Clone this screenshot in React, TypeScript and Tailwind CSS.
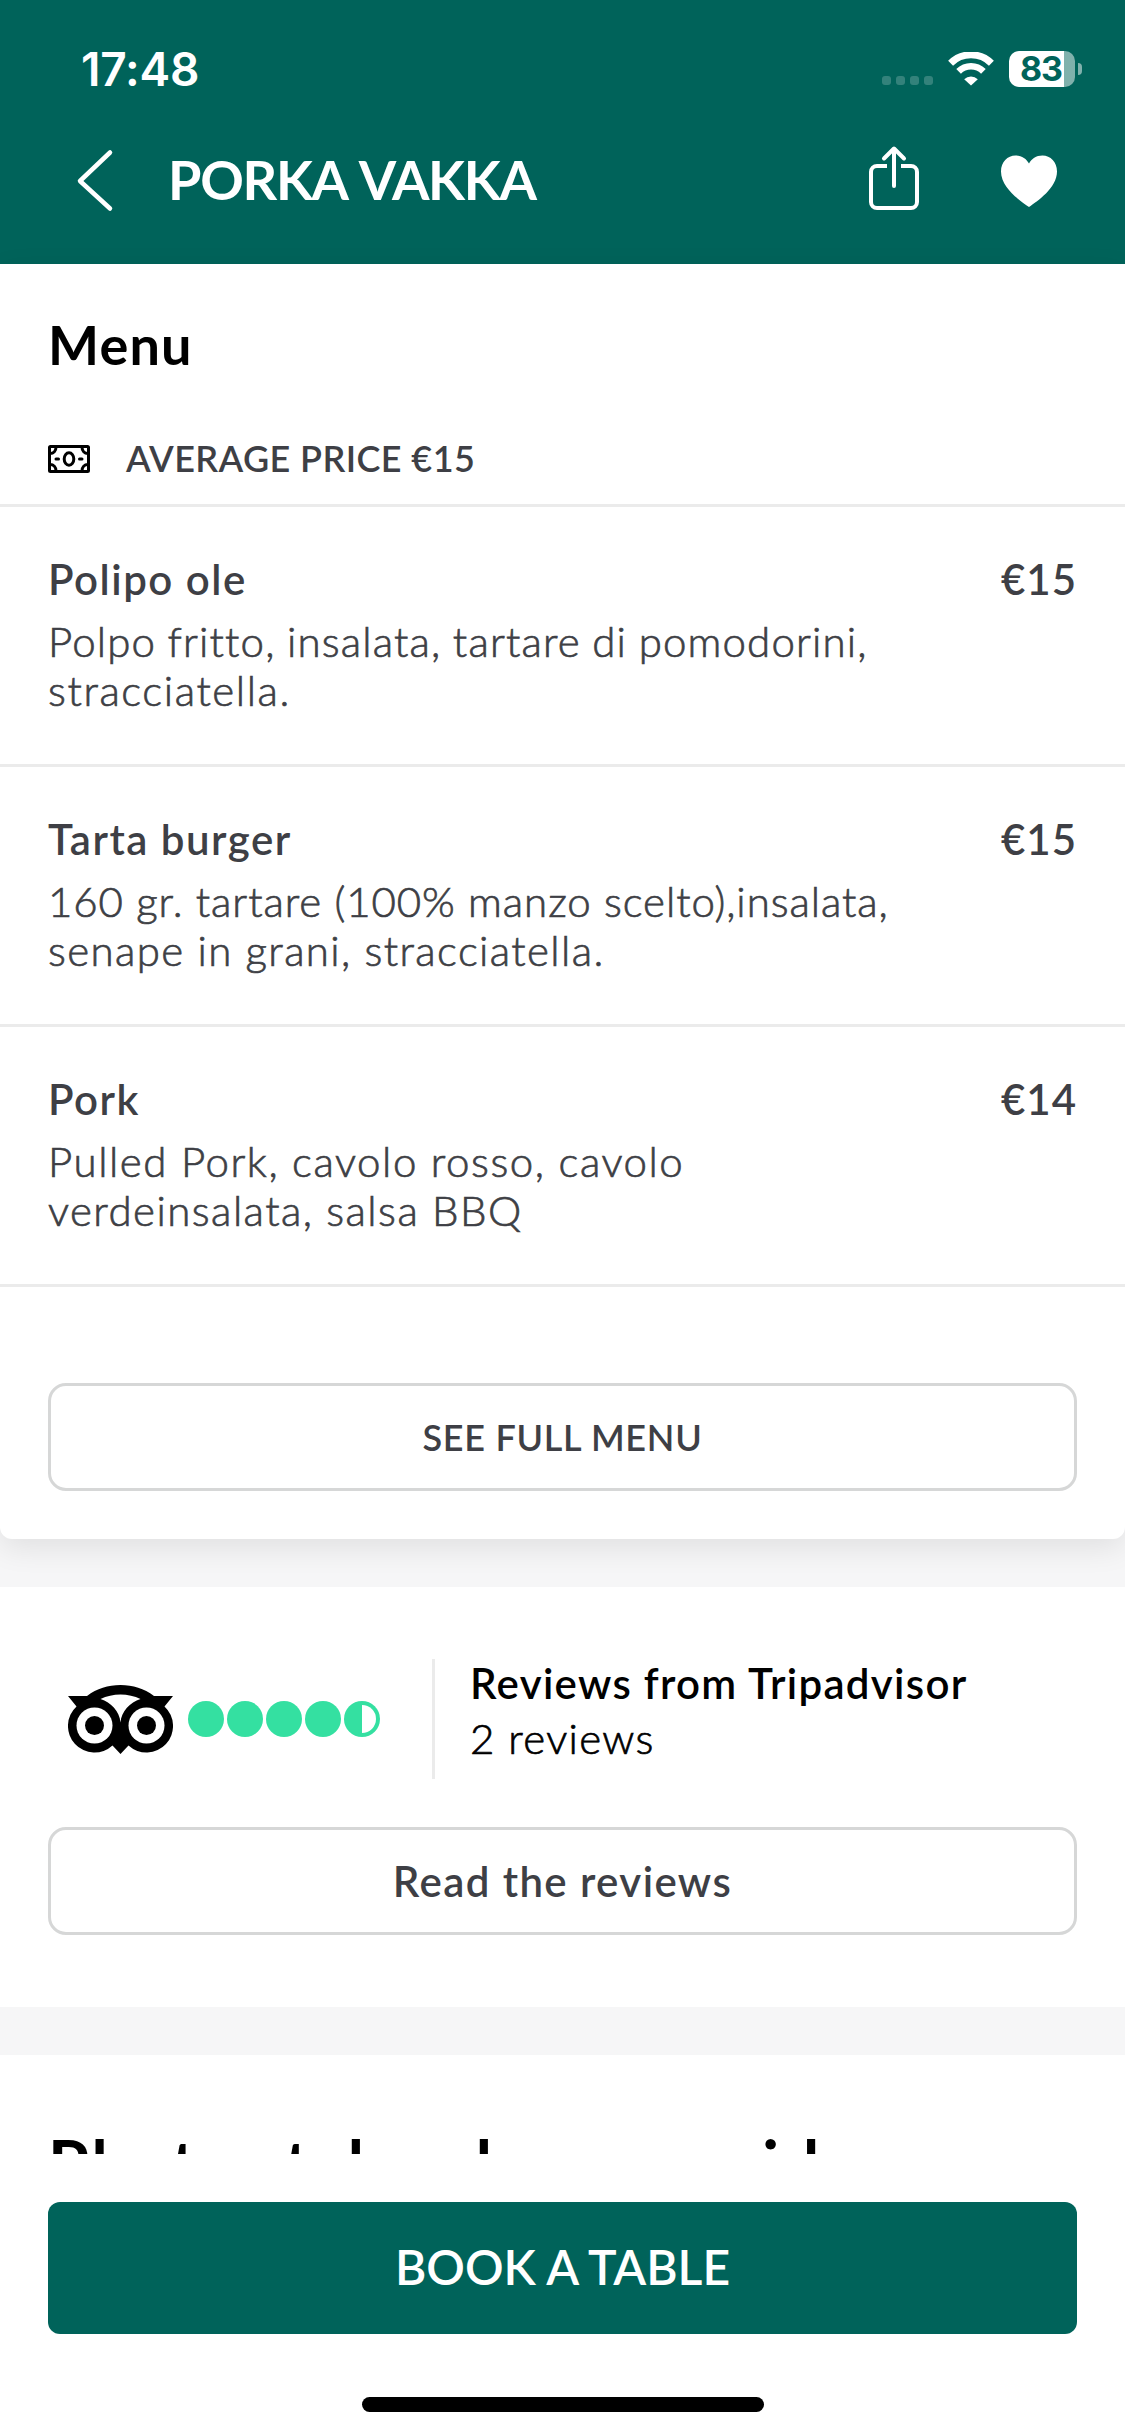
import React from 'react';

interface DishLine {
  text: string;
  tracking: string;
}

interface Dish {
  name: string;
  price: string;
  lines: DishLine[];
}

const DISHES: Dish[] = [
  {
    name: 'Polipo ole',
    price: '€15',
    lines: [
      { text: 'Polpo fritto, insalata, tartare di pomodorini,', tracking: 'tracking-[1.15px] [word-spacing:-1px]' },
      { text: 'stracciatella.', tracking: 'tracking-[1.6px]' },
    ],
  },
  {
    name: 'Tarta burger',
    price: '€15',
    lines: [
      { text: '160 gr. tartare (100% manzo scelto),insalata,', tracking: 'tracking-[0.93px]' },
      { text: 'senape in grani, stracciatella.', tracking: 'tracking-[1.4px]' },
    ],
  },
  {
    name: 'Pork',
    price: '€14',
    lines: [
      { text: 'Pulled Pork, cavolo rosso, cavolo', tracking: 'tracking-[1.55px]' },
      { text: 'verdeinsalata, salsa BBQ', tracking: 'tracking-[1.45px]' },
    ],
  },
];

function StatusBar() {
  return (
    <div className="flex h-[138px] items-center justify-between pl-[81px] pr-[43px] font-['Inter',sans-serif]">
      <span className="text-[46px] leading-none font-semibold tracking-[-0.2px]">17:48</span>
      <div className="flex items-center">
        <div className="mt-[23px] mr-[15px] flex gap-[5px]">
          <i className="size-[9px] rounded-[3px] bg-white/20" />
          <i className="size-[9px] rounded-[3px] bg-white/20" />
          <i className="size-[9px] rounded-[3px] bg-white/20" />
          <i className="size-[9px] rounded-[3px] bg-white/20" />
        </div>
        <svg className="mr-[15px] h-[34px] w-[46px]" viewBox="0 0 46 34" fill="none" stroke="#fff">
          <path d="M2.6 11.2a29 29 0 0 1 40.8 0" strokeWidth="7" />
          <path d="M10.6 19.4a17.6 17.6 0 0 1 24.8 0" strokeWidth="6.6" />
          <path d="M16.2 27.2a9.8 9.8 0 0 1 13.6 0L23 33.6z" fill="#fff" stroke="none" />
        </svg>
        <div className="flex h-9 w-[66px] items-center justify-center rounded-[10px] bg-linear-to-r from-white from-83% to-white/50 to-83% pr-0.5 text-[34px] leading-none font-bold tracking-[-1px] text-[#00635a]">
          83
        </div>
        <div className="ml-[3px] h-3 w-1 rounded-r-full bg-white/50" />
      </div>
    </div>
  );
}

function NavBar() {
  return (
    <div className="flex h-20 items-center pl-[72px] pr-[64px]">
      <svg className="h-20 w-[48px]" viewBox="0 0 48 80" fill="none" stroke="#fff" strokeWidth="4.5" strokeLinecap="round" strokeLinejoin="round">
        <path d="M38 14.500 8 43l30 27.500" />
      </svg>
      <h1 className="mt-[3px] ml-12 flex-1 text-[54px] leading-none font-bold tracking-[-1.3px] [word-spacing:3px]">PORKA VAKKA</h1>
      <svg className="mr-[73px] h-20 w-[60px]" viewBox="0 0 60 80" fill="none" stroke="#fff" strokeWidth="4" strokeLinejoin="round">
        <path d="M23 28H13a6 6 0 0 0-6 6v30a6 6 0 0 0 6 6h34a6 6 0 0 0 6-6V34a6 6 0 0 0-6-6H37" />
        <path d="M30 48V11M20 20.500 30 10.500l10 10" strokeLinecap="round" />
      </svg>
      <svg className="h-20 w-16" viewBox="0 0 64 80" fill="#fff">
        <path d="M32 69C24 63.500 4 50 4 33.500 4 24 10.500 17.500 18.500 17.500c6.500 0 11 3.500 13.500 8 2.500-4.500 7-8 13.500-8C53.500 17.500 60 24 60 33.500 60 50 40 63.500 32 69z" />
      </svg>
    </div>
  );
}

function BanknoteIcon() {
  return (
    <svg className="mt-[3px] h-[28px] w-[42px]" viewBox="0 0 42 28" fill="none" stroke="#000" strokeWidth="3" strokeLinecap="round">
      <rect x="1.500" y="1.500" width="39" height="25" rx="1" />
      <ellipse cx="21" cy="14" rx="4.800" ry="6.300" />
      <path d="M2 8.500c3.500 0 6-2.500 6-6.500M2 19.500c3.500 0 6 2.500 6 6.500M40 8.500c-3.500 0-6-2.500-6-6.500M40 19.500c-3.500 0-6 2.500-6 6.500M8 14h2.500M31.500 14h2.500" />
    </svg>
  );
}

function OwlLogo() {
  return (
    <svg className="h-[69px] w-[105px]" viewBox="0 0 105 69">
      <path d="M0 11h19C29 3.500 40 0 52.500 0S76 3.500 86 11h19l-8.500 10.500A26.500 26.500 0 0 1 60.500 60.500L52.500 69l-8-8.500A26.500 26.500 0 0 1 8.500 21.500z" />
      <path d="M32.500 14c6-3 13-4.500 20-4.500s14 1.500 20 4.500C62 17.500 53.500 26 52.500 37.500 51.500 26 43 17.500 32.500 14z" fill="#fff" />
      <circle cx="26.500" cy="40.500" r="18" fill="#fff" />
      <circle cx="78.500" cy="40.500" r="18" fill="#fff" />
      <circle cx="26.500" cy="40.500" r="9.500" />
      <circle cx="78.500" cy="40.500" r="9.500" />
    </svg>
  );
}

function Rating() {
  return (
    <div className="ml-[15px] flex gap-[3px]">
      {[0, 1, 2, 3].map((i) => (
        <span key={i} className="size-9 rounded-full bg-[#34e0a1]" />
      ))}
      <span className="size-9 rounded-full bg-[#34e0a1] pt-1 pl-[18px]">
        <span className="block h-7 w-[14px] rounded-r-full bg-white" />
      </span>
    </div>
  );
}

export default function App() {
  return (
    <div className="flex h-[2436px] w-[1125px] flex-col overflow-hidden bg-[#f6f6f7] font-['Lato',sans-serif] text-[#3e3f45]">
      <header className="h-[264px] bg-[#00635a] text-white">
        <StatusBar />
        <NavBar />
      </header>

      <section className="h-[1275px] rounded-b-[12px] bg-white pt-[54px] shadow-[0_9px_30px_rgba(0,0,0,0.09)]">
        <h2 className="pl-12 text-[54px] leading-none font-bold tracking-[1.2px] text-black">Menu</h2>
        <div className="mt-[61px] flex h-[74px] items-center border-b-3 border-[#ebebeb] pb-[22px] pl-12">
          <BanknoteIcon />
          <span className="ml-9 text-[36px] leading-none font-semibold tracking-[0.4px]">AVERAGE PRICE €15</span>
        </div>

        {DISHES.map((dish) => (
          <article key={dish.name} className="h-[260px] border-b-3 border-[#ebebeb] px-12 pt-[48px]">
            <div className="flex justify-between text-[42px] leading-[48px] font-semibold tracking-[1.5px]">
              <h3>{dish.name}</h3>
              <span className="tracking-[1px]">{dish.price}</span>
            </div>
            <div className="mt-[14px] text-[42px] leading-[49px] font-light [-webkit-text-stroke:0.7px_#3e3f45]">
              {dish.lines.map((line) => (
                <p key={line.text} className={line.tracking}>{line.text}</p>
              ))}
            </div>
          </article>
        ))}

        <button className="mx-12 mt-24 flex h-[108px] w-[1029px] items-center justify-center rounded-[18px] border-3 border-[#d6d7d7] text-[36px] leading-none font-semibold tracking-[0.7px]">
          SEE FULL MENU
        </button>
      </section>

      <section className="mt-12 h-[420px] bg-white px-12 pt-[72px]">
        <div className="flex h-[120px]">
          <div className="flex w-[384px] items-center pl-5">
            <OwlLogo />
            <Rating />
          </div>
          <div className="w-[3px] bg-[#ebebeb]" />
          <div className="-mt-1 pl-[35px] text-[42px] leading-[56px] text-black">
            <p className="font-semibold tracking-[1.3px]">Reviews from Tripadvisor</p>
            <p className="-mt-px font-light tracking-[1.3px] [-webkit-text-stroke:0.7px_#000]">2 reviews</p>
          </div>
        </div>
        <button className="mt-12 flex h-[108px] w-full items-center justify-center rounded-[18px] border-3 border-[#d6d7d7] text-[42px] leading-none font-semibold tracking-[1.4px]">
          Read the reviews
        </button>
      </section>

      <section className="mt-12 h-[99px] overflow-hidden bg-white pt-[76px] pl-12">
        <h2 className="text-[66px] leading-none font-bold tracking-[2.7px] text-black [word-spacing:-5px]">Photos taken by our guides</h2>
      </section>

      <footer className="flex flex-1 flex-col items-center bg-white px-12 pt-12">
        <button className="flex h-[132px] w-full items-center justify-center rounded-[12px] bg-[#00635a] pb-[3px] text-[48px] leading-none font-semibold text-white">
          BOOK A TABLE
        </button>
        <div className="mt-[63px] h-[15px] w-[402px] rounded-full bg-black" />
      </footer>
    </div>
  );
}
